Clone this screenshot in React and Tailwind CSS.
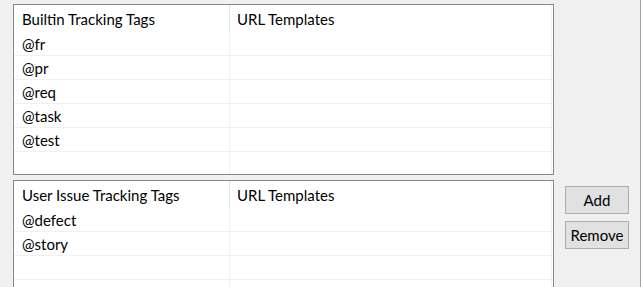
const builtinTags = ["@fr", "@pr", "@req", "@task", "@test"];
const userTags = ["@defect", "@story"];

const font = { fontFamily: 'Lato, "Noto Sans", sans-serif' };

// one grid row: tag column, divider, url column
const Row = ({ tag, header, last }) => (
  <div
    className={`flex ${header ? "h-[27px]" : "h-[24px]"} ${
      !header && !last ? "border-b border-[#f0f0f0]" : ""
    }`}
  >
    <div className="w-[215px] pl-[8px] flex items-center pt-[2px] text-black">
      {tag}
    </div>
    <div className={`w-[1px] ${header ? "bg-[#e5e5e5]" : "bg-[#eef1f6]"}`} />
    <div className="w-[321px] pl-[7px] flex items-center pt-[2px] text-black">
      {header ? "URL Templates" : ""}
    </div>
  </div>
);

const TagTable = ({ title, tags, rows, height }) => {
  const filler = Array.from({ length: rows - tags.length });
  return (
    <div
      className={`relative w-[541px] ${height} border border-[#828790] bg-white overflow-hidden`}
    >
      <Row tag={title} header />
      {tags.map((t) => (
        <Row key={t} tag={t} />
      ))}
      {filler.map((_, i) => (
        <Row key={i} tag="" last={i === filler.length - 1} />
      ))}
      <div className="absolute top-0 bottom-0 left-[537px] w-[1px] bg-[#eef1f6]" />
    </div>
  );
};

const Button = ({ children }) => (
  <button className="w-[64px] h-[28px] border border-[#adadad] bg-[#e1e1e1] text-black text-[15px] leading-none">
    {children}
  </button>
);

export default function App() {
  return (
    <div
      className="relative w-[641px] h-[287px] bg-[#f0f0f0] overflow-hidden text-[15px]"
      style={font}
    >
      <div className="flex flex-col pl-[13px] pt-[4px] gap-[5px]">
        <TagTable
          title="Builtin Tracking Tags"
          tags={builtinTags}
          rows={6}
          height="h-[171px]"
        />
        <div className="flex items-start">
          <TagTable
            title="User Issue Tracking Tags"
            tags={userTags}
            rows={6}
            height="h-[160px]"
          />
          <div className="flex flex-col gap-[7px] ml-[11px] mt-[6px]">
            <Button>Add</Button>
            <Button>Remove</Button>
          </div>
        </div>
      </div>
      <div className="absolute top-0 bottom-0 right-0 w-[1px] bg-[#a0a0a0]" />
    </div>
  );
}
